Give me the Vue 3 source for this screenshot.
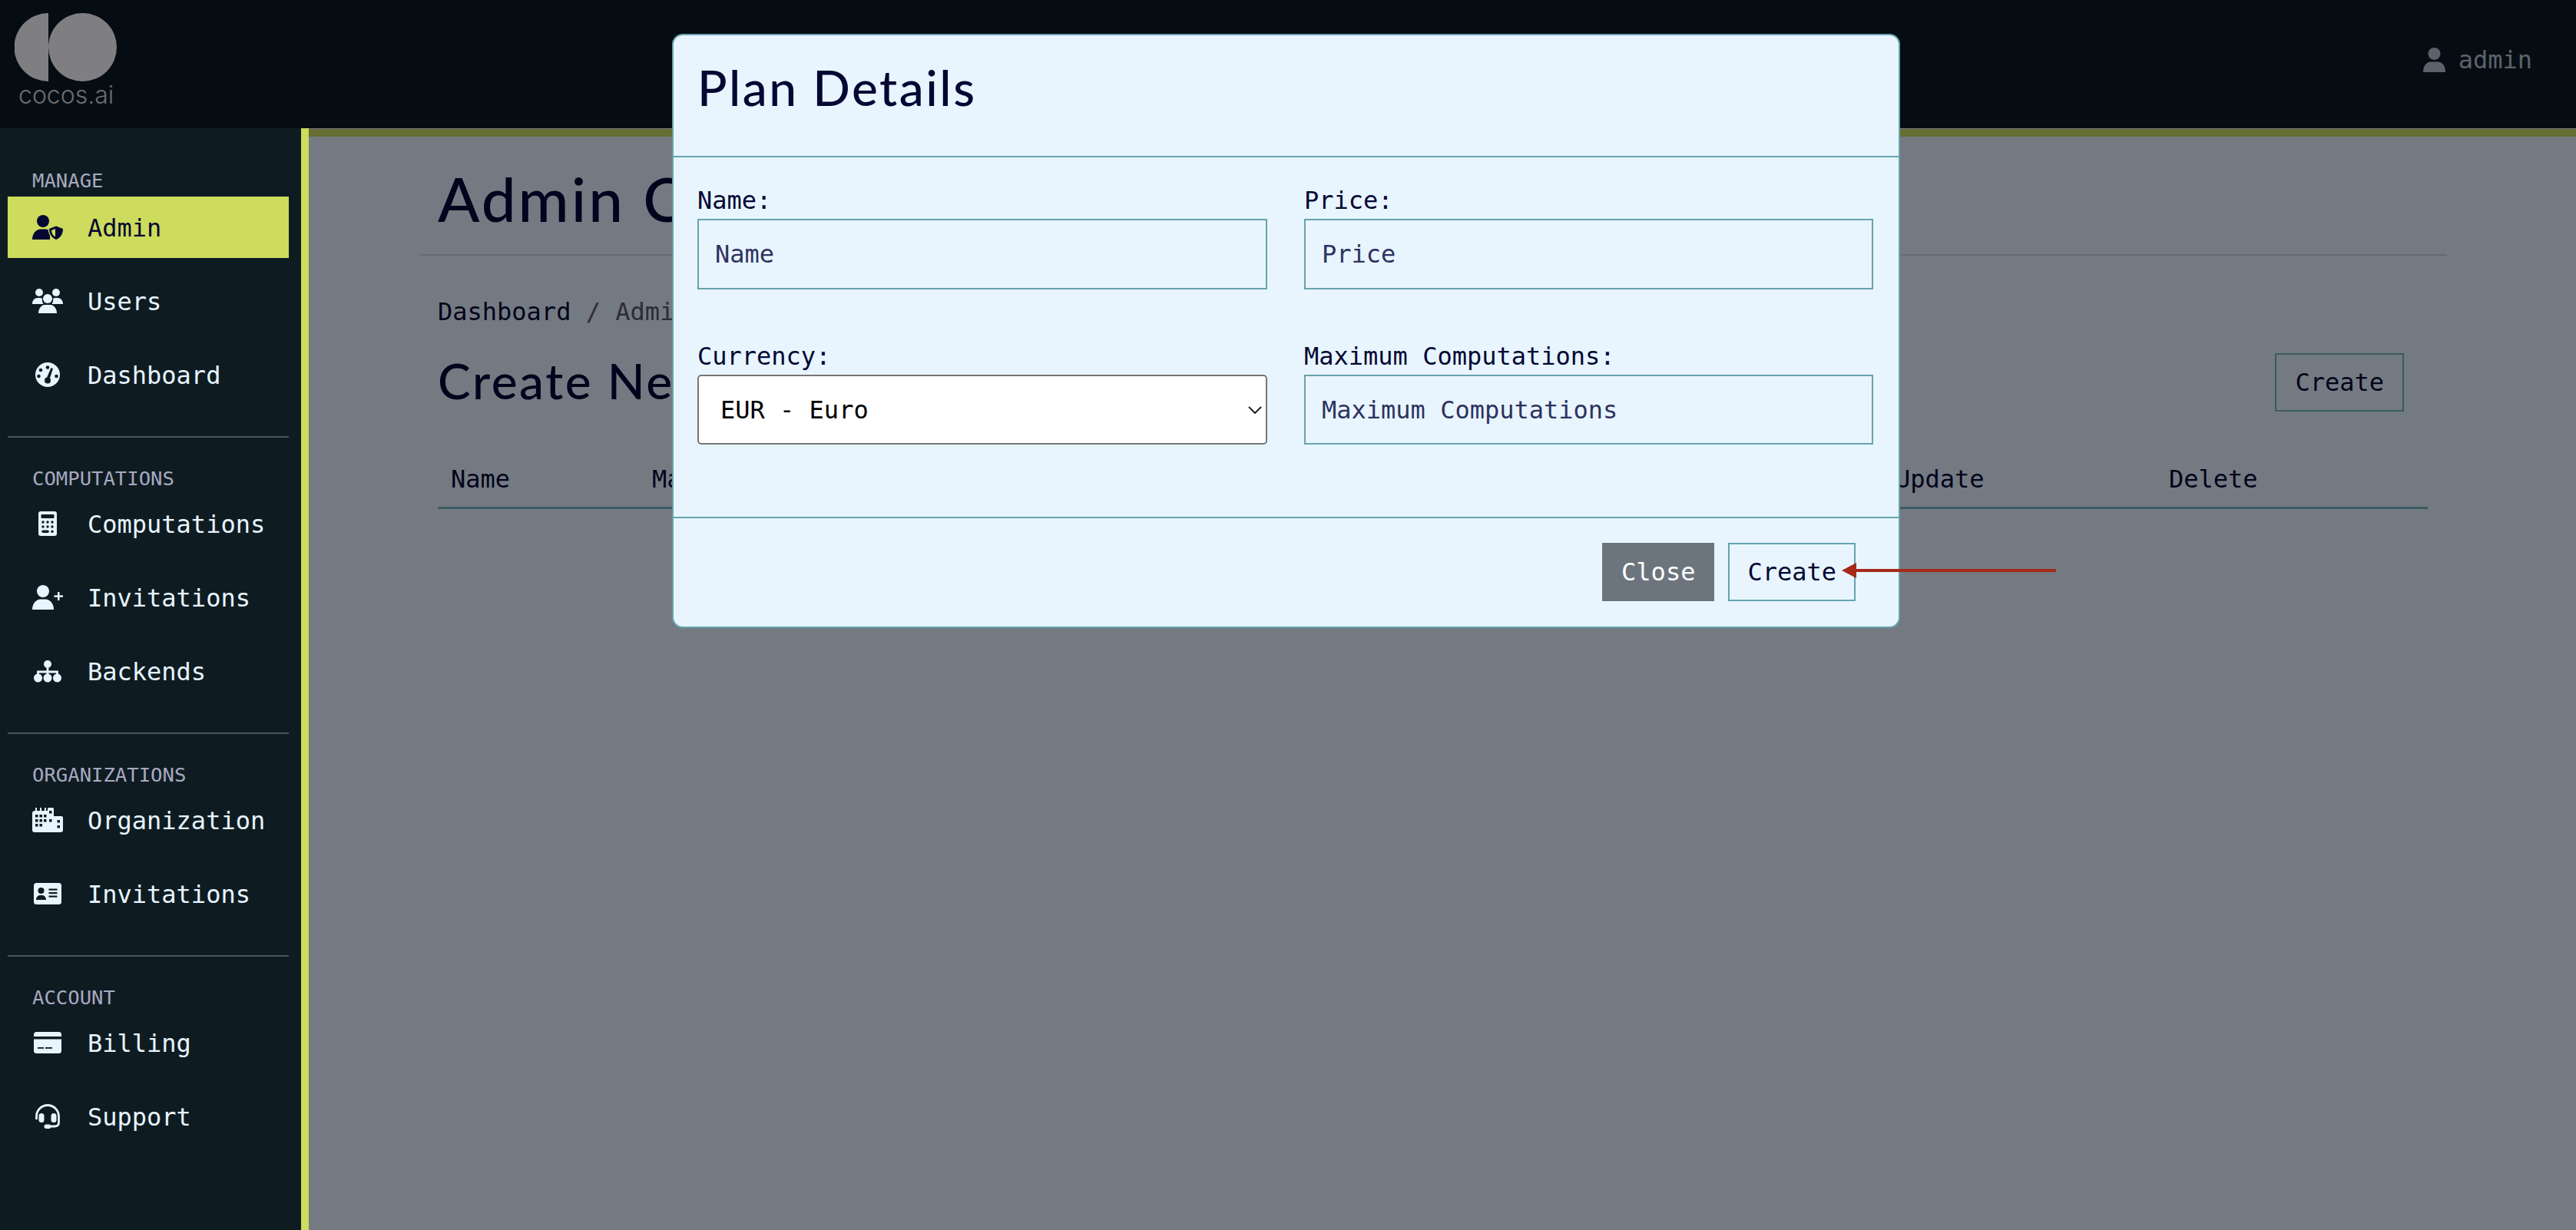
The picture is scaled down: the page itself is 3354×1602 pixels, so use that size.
<template>
  <div class="page">
    <header class="topbar">
      <div class="logo">
        <svg class="logo-mark" width="133" height="89" viewBox="0 0 133 89">
          <path d="M44 0 A44.5 44.5 0 0 0 44 89 Z" />
          <circle cx="88.5" cy="44.5" r="44.5" />
        </svg>
        <span class="logo-text">cocos.ai</span>
      </div>
      <div class="user">
        <svg width="29" height="32" viewBox="0 0 29 32">
          <circle cx="14.5" cy="8" r="8" />
          <path d="M0 32 C0 24 4 18.500 10 18.500 H19 C25 18.500 29 24 29 32 Z" />
        </svg>
        <span>admin</span>
      </div>
    </header>

    <div class="layout">
      <aside class="sidebar">
        <section v-for="group in groups" :key="group.title" class="nav-group">
          <h6 class="nav-title">{{ group.title }}</h6>
          <a
            v-for="item in group.items"
            :key="item.label"
            class="nav-item"
            :class="{ active: item.active }"
          >
            <svg class="nav-icon" width="40" height="32" viewBox="0 0 40 32">
              <template v-if="item.icon === 'admin'">
                <circle cx="14" cy="8" r="8" />
                <path d="M0 32 C0 24 5 18.500 11 18.500 H17 C20 18.500 22 19.500 23 21 V32 Z" />
                <path class="hole" d="M31 12.500 L41.500 17 C41.500 24 38 31 31 34 C24 31 20.500 24 20.500 17 Z" />
                <path d="M31 14.500 L40 18 C40 24 37 30 31 32 C25 30 22 24 22 18 Z" />
                <path class="hole" d="M30 18 L25 20 C25 24 27 27 30 28.500 Z" />
              </template>
              <template v-else-if="item.icon === 'users'">
                <circle cx="9" cy="5" r="5" />
                <circle cx="31" cy="5" r="5" />
                <circle cx="20" cy="13" r="6" />
                <path d="M0 20 C0 15 3 12 7 12 H10 C11 12 12 12 13 13 C12.500 15 13 18 14.500 20 Z" />
                <path d="M40 20 C40 15 37 12 33 12 H30 C29 12 28 12 27 13 C27.500 15 27 18 25.500 20 Z" />
                <path d="M8 32 C8 26 12 21 16 21 H24 C28 21 32 26 32 32 Z" />
              </template>
              <template v-else-if="item.icon === 'gauge'">
                <circle cx="20" cy="16" r="16" />
                <circle class="hole" cx="20" cy="6.500" r="2.300" />
                <circle class="hole" cx="11" cy="10" r="2.300" />
                <circle class="hole" cx="8.500" cy="18" r="2.300" />
                <circle class="hole" cx="31.500" cy="18" r="2.300" />
                <circle class="hole" cx="20" cy="23.500" r="4" />
                <path class="hole" d="M24.500 7 L27 8 L22.500 22 L18.500 21 Z" />
              </template>
              <template v-else-if="item.icon === 'calc'">
                <rect x="8" width="24" height="32" rx="3" />
                <rect class="hole" x="11.500" y="4" width="17" height="5" rx="1" />
                <g class="hole">
                  <circle cx="14" cy="14" r="1.700" />
                  <circle cx="20" cy="14" r="1.700" />
                  <circle cx="26" cy="14" r="1.700" />
                  <circle cx="14" cy="20" r="1.700" />
                  <circle cx="20" cy="20" r="1.700" />
                  <circle cx="26" cy="20" r="1.700" />
                  <rect x="12.300" y="24.500" width="9.500" height="3.400" rx="1.700" />
                  <circle cx="26" cy="26.200" r="1.700" />
                </g>
              </template>
              <template v-else-if="item.icon === 'user-plus'">
                <circle cx="14" cy="8" r="8" />
                <path d="M0 32 C0 24 5 18.500 11 18.500 H17 C23 18.500 28 24 28 32 Z" />
                <rect x="33" y="9" width="2.500" height="11" />
                <rect x="28.500" y="13.300" width="11.500" height="2.500" />
              </template>
              <template v-else-if="item.icon === 'sitemap'">
                <circle cx="20" cy="7" r="5" />
                <circle cx="7.500" cy="25" r="5.500" />
                <circle cx="20" cy="25" r="5.500" />
                <circle cx="32.500" cy="25" r="5.500" />
                <path class="line" d="M20 10 V22 M7.500 21 V17 H32.500 V21" />
              </template>
              <template v-else-if="item.icon === 'city'">
                <path d="M4 0 H6 V4 H10 V0 H12 V4 H16 V0 H18 V4 H20 V1.500 Q20 0 21.500 0 H26.500 Q28 0 28 1.500 V11 H38 Q40 11 40 13 V29 Q40 32 37 32 H3 Q0 32 0 29 V7 Q0 4 4 4 Z" />
                <g class="hole">
                  <rect x="4" y="9" width="3.500" height="3.500" />
                  <rect x="9.500" y="9" width="3.500" height="3.500" />
                  <rect x="15" y="9" width="3.500" height="3.500" />
                  <rect x="4" y="15" width="3.500" height="3.500" />
                  <rect x="9.500" y="15" width="3.500" height="3.500" />
                  <rect x="15" y="15" width="3.500" height="3.500" />
                  <rect x="4" y="21" width="3.500" height="3.500" />
                  <rect x="9.500" y="21" width="3.500" height="3.500" />
                  <rect x="22" y="4" width="3.500" height="3.500" />
                  <rect x="22" y="15" width="3.500" height="3.500" />
                  <rect x="32.500" y="16" width="3.500" height="3.500" />
                  <rect x="32.500" y="23" width="3.500" height="3.500" />
                </g>
              </template>
              <template v-else-if="item.icon === 'id'">
                <rect x="2" y="2" width="36" height="28" rx="3.500" />
                <g class="hole">
                  <circle cx="11.500" cy="12" r="4" />
                  <path d="M5 24 C5 20 8 18 10 18 H13 C15 18 18 20 18 24 Z" />
                  <rect x="21.500" y="9.500" width="11" height="2.200" />
                  <rect x="21.500" y="14" width="11" height="2.200" />
                  <rect x="21.500" y="18.500" width="11" height="2.200" />
                </g>
              </template>
              <template v-else-if="item.icon === 'card'">
                <rect x="2" y="2" width="36" height="28" rx="3.500" />
                <g class="hole">
                  <rect x="2" y="8" width="36" height="3.500" />
                  <rect x="7" y="22" width="8" height="1.800" />
                  <rect x="17" y="22" width="9" height="1.800" />
                </g>
              </template>
              <template v-else>
                <path class="line" d="M5.500 20 V16 A14.500 14.500 0 0 1 34.500 16 V24 Q34.500 29 29 29 H22" />
                <rect x="8.500" y="12" width="7" height="12" rx="3.500" />
                <rect x="24.500" y="12" width="7" height="12" rx="3.500" />
                <rect x="15.500" y="26.500" width="9" height="5.500" rx="2.700" />
              </template>
            </svg>
            <span class="nav-label">{{ item.label }}</span>
          </a>
        </section>
      </aside>

      <main class="content">
        <div class="wrap">
          <h1 class="page-title">Admin Console</h1>
          <div class="inner">
            <nav class="crumbs"><span class="crumb-link">Dashboard</span> / Admin Console</nav>
            <div class="title-row">
              <h2 class="sub-title">Create New Plan</h2>
              <button class="btn btn-outline">Create</button>
            </div>
            <div class="plan-head">
              <span>Name</span>
              <span>Maximum Computations</span>
              <span>Price</span>
              <span>Update</span>
              <span>Delete</span>
            </div>
          </div>
        </div>
      </main>
    </div>

    <div class="backdrop"></div>

    <div class="modal">
      <div class="modal-head">
        <h3 class="modal-title">Plan Details</h3>
      </div>
      <form class="modal-body" @submit.prevent>
        <div class="field">
          <label>Name:</label>
          <input type="text" placeholder="Name" />
        </div>
        <div class="field">
          <label>Price:</label>
          <input type="text" placeholder="Price" />
        </div>
        <div class="field row-two">
          <label>Currency:</label>
          <div class="select-wrap">
            <select v-model="currency">
              <option value="EUR">EUR - Euro</option>
              <option value="USD">USD - US Dollar</option>
            </select>
            <svg class="chevron" width="18" height="10" viewBox="0 0 18 10">
              <path d="M1 1 L9 9 L17 1" />
            </svg>
          </div>
        </div>
        <div class="field row-two">
          <label>Maximum Computations:</label>
          <input type="text" placeholder="Maximum Computations" />
        </div>
      </form>
      <div class="modal-foot">
        <button class="btn btn-close">Close</button>
        <button class="btn btn-outline">Create</button>
      </div>
    </div>

    <svg class="arrow" width="280" height="20" viewBox="0 0 280 20">
      <path d="M0 10 L19 0 V8 H279 V12 H19 V20 Z" />
    </svg>
  </div>
</template>

<script setup>
import { ref } from 'vue';

const currency = ref('EUR');

const groups = [
  {
    title: 'MANAGE',
    items: [
      { label: 'Admin', icon: 'admin', active: true },
      { label: 'Users', icon: 'users' },
      { label: 'Dashboard', icon: 'gauge' }
    ]
  },
  {
    title: 'COMPUTATIONS',
    items: [
      { label: 'Computations', icon: 'calc' },
      { label: 'Invitations', icon: 'user-plus' },
      { label: 'Backends', icon: 'sitemap' }
    ]
  },
  {
    title: 'ORGANIZATIONS',
    items: [
      { label: 'Organization', icon: 'city' },
      { label: 'Invitations', icon: 'id' }
    ]
  },
  {
    title: 'ACCOUNT',
    items: [
      { label: 'Billing', icon: 'card' },
      { label: 'Support', icon: 'headset' }
    ]
  }
];
</script>

<style>
html, body {
  margin: 0;
  background: #e9f4ff;
}
</style>

<style scoped>
.page {
  position: relative;
  display: flex;
  flex-direction: column;
  height: 100vh;
  overflow: hidden;
  font-family: "DejaVu Sans Mono", "Liberation Mono", monospace;
  font-size: 32px;
  color: #050733;
  background: #e9f4ff;
}

/* top bar */
.topbar {
  flex: none;
  display: flex;
  justify-content: space-between;
  height: 167px;
  background: #0a1a1f;
}
.logo {
  position: relative;
  padding: 17px 0 0 19px;
  display: flex;
  flex-direction: column;
}
.logo-mark {
  fill: #fff;
}
.logo-text {
  font-family: "Inter", sans-serif;
  font-weight: 300;
  font-size: 32px;
  line-height: 38px;
  margin: -1px 0 0 5px;
  color: #d8d8d8;
}
.user {
  display: flex;
  align-items: center;
  gap: 17px;
  height: 156px;
  padding-right: 57px;
  color: #b8c4d0;
  fill: #b8c4d0;
}

/* sidebar */
.layout {
  flex: 1;
  display: flex;
  min-height: 0;
}
.sidebar {
  position: relative;
  z-index: 20;
  flex: none;
  box-sizing: border-box;
  width: 402px;
  padding: 0 16px 0 10px;
  background: #0e1c22;
  border-right: 10px solid #cddc5c;
  color: #e8f4ff;
  --hole: #0e1c22;
}
.nav-group {
  padding: 38px 0 24px;
  border-top: 2px solid #4a555c;
}
.nav-group:first-child {
  padding: 53px 0 24px;
  border-top: 0;
}
.nav-group:first-child .nav-title {
  margin-bottom: 6px;
}
.nav-title {
  margin: 0 0 4px 32px;
  font-size: 25.6px;
  line-height: 30px;
  font-weight: 400;
  color: #a9a9c0;
}
.nav-item {
  display: flex;
  align-items: center;
  gap: 32px;
  height: 80px;
  margin-bottom: 16px;
  padding-left: 32px;
}
.nav-label {
  padding-top: 2px;
}
.nav-item.active {
  background: #cddc5c;
  color: #050733;
  --hole: #cddc5c;
}
.nav-icon {
  flex: none;
  fill: currentColor;
}
.hole {
  fill: var(--hole);
}
.line {
  fill: none;
  stroke: currentColor;
  stroke-width: 2.800;
}

/* main content */
.content {
  flex: 1;
  min-width: 0;
  border-top: 10px solid #cddc5c;
  margin-top: 1px;
  padding: 32px 168px 0 144px;
}
.page-title {
  margin: 0;
  padding: 0 24px 25px;
  font-family: "Lato", sans-serif;
  font-weight: 500;
  font-size: 80px;
  line-height: 96px;
  letter-spacing: 3px;
  border-bottom: 2px solid #ced4da;
}
.inner {
  padding: 0 25px 0 24px;
}
.crumbs {
  margin-top: 54px;
  line-height: 38px;
  color: #585c66;
}
.crumb-link {
  color: #050733;
}
.title-row {
  display: flex;
  justify-content: space-between;
  align-items: center;
  margin-top: 35px;
  padding-right: 31px;
}
.title-row .btn-outline {
  border-color: #78b4be;
}
.sub-title {
  margin: -4px 0 0;
  font-family: "Lato", sans-serif;
  font-weight: 500;
  font-size: 64px;
  line-height: 76px;
  letter-spacing: 2.5px;
}
.plan-head {
  display: grid;
  grid-template-columns: 262px 1fr 1fr 356px 354px;
  margin-top: 69px;
  padding-bottom: 17px;
  line-height: 38px;
  border-bottom: 3px solid #78b4be;
}
.plan-head span {
  padding-left: 17px;
}

/* buttons */
.btn {
  box-sizing: border-box;
  height: 76px;
  padding: 0 24px;
  font: inherit;
  border: 2px solid transparent;
  border-radius: 0;
}
.btn-outline {
  background: transparent;
  border-color: #67a3ae;
  color: #050733;
}
.btn-close {
  background: #6c757d;
  color: #fff;
}

/* modal */
.backdrop {
  position: absolute;
  inset: 0;
  z-index: 10;
  background: rgba(0, 0, 6, 0.5);
}
.modal {
  position: absolute;
  z-index: 30;
  top: 44px;
  left: 875px;
  box-sizing: border-box;
  width: 1599px;
  background: #e8f5ff;
  border: 2px solid #67a3ae;
  border-radius: 14px;
}
.modal-head {
  height: 159px;
  box-sizing: border-box;
  padding: 0 31px;
  border-bottom: 2px solid #67a3ae;
}
.modal-title {
  margin: 0;
  padding-top: 30px;
  font-family: "Lato", sans-serif;
  font-weight: 500;
  font-size: 64px;
  line-height: 76px;
  letter-spacing: 2.5px;
}
.modal-body {
  display: grid;
  grid-template-columns: 742px 741px;
  column-gap: 48px;
  row-gap: 68px;
  padding: 37px 31px 94px;
}
.field label {
  display: block;
  line-height: 38px;
  margin-bottom: 5px;
}
.field input,
.field select {
  display: block;
  box-sizing: border-box;
  width: 100%;
  height: 92px;
  font: inherit;
  outline: none;
}
.row-two input,
.row-two select {
  height: 91px;
}
.field input {
  padding: 0 21px;
  background: transparent;
  border: 2px solid #67a3ae;
  border-radius: 0;
  color: #050733;
}
.field input::placeholder {
  color: #2e3260;
  opacity: 1;
}
.select-wrap {
  position: relative;
}
.field select {
  appearance: none;
  padding: 0 28px;
  background: #fff;
  border: 2px solid #767676;
  border-radius: 5px;
  color: #000;
}
.chevron {
  position: absolute;
  top: 41px;
  right: 7px;
  fill: none;
  stroke: #222;
  stroke-width: 2;
  pointer-events: none;
}
.modal-foot {
  display: flex;
  justify-content: flex-end;
  gap: 18px;
  padding: 32px 56px 33px 0;
  border-top: 2px solid #67a3ae;
}
.modal-foot .btn {
  padding: 0 23px;
}
.arrow {
  position: absolute;
  z-index: 40;
  top: 733px;
  left: 2398px;
  fill: #a52a1a;
}
</style>
